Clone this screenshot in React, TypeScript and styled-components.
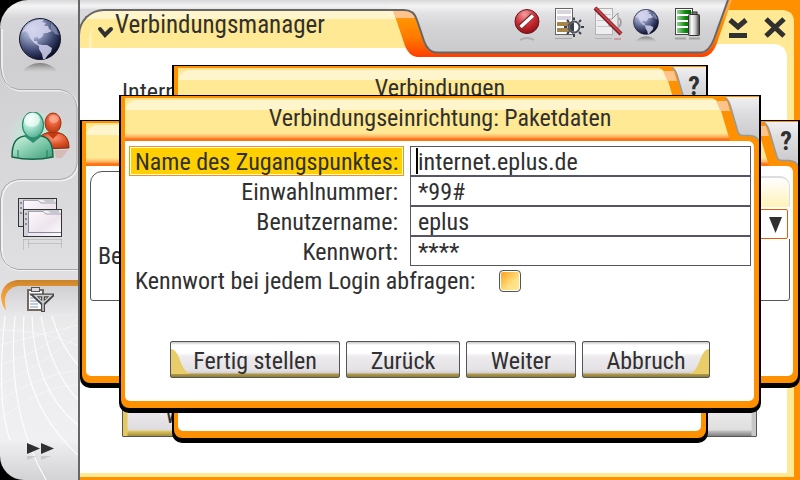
import React, { useState } from 'react';
import styled, { createGlobalStyle, css } from 'styled-components';

const orange = '#ff9000';
const ink = '#303030';
const paleYellow = '#fff5cc';
const yellow = '#ffe994';

const GlobalStyle = createGlobalStyle`
  *, *::before, *::after { box-sizing: border-box; }
  html, body, #root { height: 100%; }
  body {
    margin: 0;
    background: #000;
    color: ${ink};
    font: 24px/28px "Roboto Condensed", "Liberation Sans", sans-serif;
    overflow: hidden;
  }
  button, input, select { font: inherit; color: inherit; margin: 0; }
`;

/* ---------- desktop frame ---------- */

const Desktop = styled.div`
  position: relative;
  display: flex;
  height: 100%;
  overflow: hidden;
`;

const Sidebar = styled.nav`
  position: relative;
  display: flex;
  flex-direction: column;
  flex: 0 0 80px;
  border-right: 2px solid #666;
  border-radius: 28px 0 0 24px;
  background: linear-gradient(#d8d8da 0, #f4f4f5 6px, #d6d6d8 18px, #cfcfd1 60px, #dadadc 200px, #e0e0e2 280px, #ebebed 330px, #f0f0f2 440px, #d4d4d6 478px);
  overflow: hidden;
`;

const SidebarArt = styled.svg`
  position: absolute;
  inset: 0;
  width: 78px;
  height: 480px;
`;

const SideButton = styled.button<{ $height: number; $top: number }>`
  position: relative;
  display: flex;
  justify-content: center;
  align-items: flex-start;
  height: ${(p) => p.$height}px;
  padding: ${(p) => p.$top}px 0 0 2px;
  border: 0;
  background: none;
`;

const SideSpacer = styled.div`
  flex: 1;
`;

const MainWindow = styled.main`
  flex: 1;
  min-width: 0;
  display: flex;
  flex-direction: column;
  background: ${orange};
`;

/* ---------- top bar ---------- */

const TopBar = styled.header`
  position: relative;
  display: flex;
  flex: 0 0 58px;
  background: linear-gradient(#d8d8da, #f4f4f5 6px, #e4e4e6 9px, #fff 9px);
`;

const TitleTabBack = styled.div`
  display: flex;
  flex: 1;
  min-width: 0;
  height: 39px;
  margin-top: 9px;
  background: linear-gradient(90deg, #dadadc 24px, transparent 24px);
`;

const TitleTab = styled.div`
  display: flex;
  flex: 1;
  margin: 0 118px 0 -2px;
  border: solid #666;
  border-width: 2px 0 0 2px;
  border-radius: 26px 0 0 0;
  background: linear-gradient(${paleYellow} 8px, ${yellow} 8px);
  overflow: hidden;
`;

const TitleButton = styled.button`
  flex: 1;
  display: flex;
  align-items: center;
  gap: 1px;
  margin: 8px 0 0 9px;
  padding: 0 0 18px 8px;
  border: 0;
  border-radius: 20px 0 0 0;
  background: linear-gradient(90deg, ${paleYellow}, ${yellow} 4px);
  font-size: 25px;
  line-height: 16px;
`;

const Chevron = styled.svg`
  width: 17px;
  height: 32px;
`;

const FrameArt = styled.svg`
  position: absolute;
  right: 0;
  top: 0;
  width: 410px;
  height: 58px;
`;

const Tray = styled.ul`
  position: relative;
  display: flex;
  gap: 8px;
  margin: 0;
  padding: 6px 19px 0 0;
  list-style: none;
`;

const TrayItem = styled.li`
  width: 32px;
  height: 36px;
`;

const GlobeItem = styled(TrayItem)`
  padding: 3px 0 0 1px;
`;

const WindowControls = styled.div`
  position: relative;
  display: flex;
  gap: 8px;
  padding: 16px 11px 0 0;
`;

const ControlButton = styled.button`
  width: 29px;
  height: 28px;
  padding: 0;
  border: 0;
  background: none;
`;

/* ---------- manager page ---------- */

const Page = styled.section`
  flex: 1;
  display: flex;
  flex-direction: column;
  justify-content: space-between;
  margin: 0 6px 3px 0;
  padding: 20px 30px 36px 42px;
  border: solid ${yellow};
  border-width: 0 7px 4px 0;
  background: #fff;
`;

const PageActions = styled.div`
  display: flex;
  justify-content: space-between;
`;

const PageButton = styled.button<{ $gold?: boolean }>`
  width: 150px;
  height: 44px;
  border: 1px solid #555;
  border-radius: 1px;
  padding: 0 0 0 42px;
  text-align: left;
  background: ${(p) =>
    p.$gold
      ? 'linear-gradient(90deg, #e3c960 4px, transparent 5px), linear-gradient(#f6f4f6, #dedcde 36px, #e3c960 37px, #a08c3c)'
      : 'linear-gradient(270deg, #c8c8c8 4px, transparent 5px), linear-gradient(#f6f6f6, #dedede 36px, #c0c0c0 37px, #808080)'};
`;

/* ---------- dialogs ---------- */

type Inset = { $left: number; $right: number; $top: number; $bottom?: number };

const DialogBox = styled.section<Inset>`
  position: absolute;
  left: ${(p) => p.$left}px;
  right: ${(p) => p.$right}px;
  top: ${(p) => p.$top}px;
  ${(p) => p.$bottom !== undefined && css`bottom: ${p.$bottom}px;`}
  display: flex;
  flex-direction: column;
  border: solid #000;
  border-width: 1px 2px 5px 2px;
  border-radius: 0 0 10px 10px;
  background: #000;
`;

const DialogFrame = styled.div`
  flex: 1;
  display: flex;
  flex-direction: column;
  border: solid ${orange};
  border-width: 0 5px 7px 4px;
  border-radius: 0 0 8px 8px;
  background: ${orange};
`;

const DialogTitle = styled.header`
  position: relative;
  display: flex;
  height: 45px;
  margin-right: -5px;
  background: linear-gradient(${orange} 2px, #ffe08a 2px, ${yellow} 6px, ${yellow} 37px, #ffb060 41px, #ff7010 43px, #ff7810);
`;

const TitleGlow = styled.div`
  flex: 1;
  margin: 4px 30px 0 0;
  height: 14px;
  border-radius: 12px 0 0 0;
  background: linear-gradient(#fff5cc, #fff5cc 10px, ${yellow} 10px);
`;

const CornerArt = styled.svg`
  position: absolute;
  right: 0;
  top: 0;
  width: 56px;
  height: 45px;
`;

const DialogHeading = styled.h2`
  position: absolute;
  left: 0;
  right: 4px;
  top: 8px;
  margin: 0;
  font-size: 24px;
  line-height: 28px;
  font-weight: 400;
  text-align: center;
`;

const HelpButton = styled.button`
  position: absolute;
  right: 0;
  top: 6px;
  width: 24px;
  height: 28px;
  padding: 0;
  border: 0;
  background: none;
  font-size: 26px;
  font-weight: 700;
`;

const DialogBody = styled.div`
  flex: 1;
  padding: 5px 3px 23px 4px;
  border-radius: 0 6px 5px 5px;
  background: #fff;
`;

/* ---------- access point form ---------- */

const Form = styled.form`
  display: flex;
  flex-direction: column;
`;

const Fields = styled.div`
  display: grid;
  grid-template-columns: 275px 1fr;
  column-gap: 6px;
  grid-auto-rows: 30px;
`;

const FieldLabel = styled.label<{ $active?: boolean }>`
  padding: 0 5px;
  border: 1px solid ${(p) => (p.$active ? orange : 'transparent')};
  background: ${(p) => (p.$active ? '#ffd000' : 'none')};
  box-shadow: ${(p) => (p.$active ? 'inset 0 0 0 1px #fff' : 'none')};
  line-height: 30px;
  text-align: right;
  white-space: nowrap;
`;

const TextInput = styled.input`
  width: 100%;
  min-width: 0;
  height: 30px;
  padding: 2px 7px 0;
  border: 1px solid #555566;
  border-radius: 0;
  background: #fff;
  outline: none;
`;

const InputCell = styled.div`
  position: relative;
  display: flex;
`;

const Caret = styled.span`
  position: absolute;
  left: 6px;
  top: 2px;
  width: 2px;
  height: 26px;
  background: #000;
`;

const CheckRow = styled.div`
  display: flex;
  align-items: center;
  gap: 24px;
  height: 30px;
  padding-left: 6px;
  line-height: 30px;
  white-space: nowrap;
`;

const CheckBox = styled.input`
  appearance: none;
  width: 22px;
  height: 22px;
  border: 1px solid #555;
  border-radius: 4px;
  background: linear-gradient(135deg, #ff9a10, #ffe083 60%, #ffe994);
  box-shadow: inset 0 0 0 1px #fff;
`;

const Actions = styled.div`
  display: flex;
  justify-content: center;
  gap: 6px;
  margin-top: 45px;
`;

const ActionButton = styled.button<{ $width: number }>`
  position: relative;
  width: ${(p) => p.$width}px;
  height: 37px;
  padding: 2px 0 0;
  border: 1px solid #555;
  border-radius: 2px;
  background: linear-gradient(#c4c4c6 0, #fff 3px, #fff 11px, #eeecef 14px, #e4e1e5 28px, #d4d0d4 31px, #b39c4a 32px, #8c7a35);
`;

const CornerWave = styled.svg<{ $side: 'left' | 'right' }>`
  position: absolute;
  ${(p) => p.$side}: 0;
  top: 7px;
  width: 20px;
  height: 26px;
  ${(p) => p.$side === 'right' && css`transform: scaleX(-1);`}
`;

/* ---------- bearer group ---------- */

const Group = styled.div`
  position: relative;
  display: flex;
  justify-content: space-between;
  height: 130px;
  border: 1px solid #555;
  border-radius: 12px 10px 3px 3px;
`;

const GroupLabel = styled.label`
  padding: 70px 0 0 7px;
`;

const GroupSide = styled.div`
  flex: 0 0 80px;
  margin: -1px -1px 0 0;
  padding-top: 5px;
  background: #fff;
  height: 68px;
`;

const GroupGlow = styled.div`
  height: 31px;
  border: solid #ddd;
  border-width: 2px 1px 0 0;
  border-radius: 0 10px 0 0;
  background: linear-gradient(#fff, #fff2b8);
`;

const Select = styled.select`
  display: block;
  width: 78px;
  height: 30px;
  margin-top: 2px;
  border: 1px solid #e65c00;
  border-radius: 2px;
  appearance: none;
  background: #fff;
`;

const SelectArrow = styled.svg`
  position: absolute;
  right: 7px;
  top: 45px;
  width: 13px;
  height: 16px;
  pointer-events: none;
`;

/* ---------- icons ---------- */

function Globe({ size, id }: { size: number; id: string }) {
  return (
    <svg width={size} height={Math.round((size * 54) / 42)} viewBox="0 0 42 54" aria-hidden="true">
      <defs>
        <radialGradient id={id} cx="0.32" cy="0.25" r="0.8">
          <stop offset="0" stopColor="#dce0f0" />
          <stop offset="0.35" stopColor="#8b95b8" />
          <stop offset="0.7" stopColor="#39436b" />
          <stop offset="1" stopColor="#070a20" />
        </radialGradient>
        <linearGradient id={`${id}m`} x2="0" y2="1">
          <stop offset="0" stopColor="#555" stopOpacity="0.7" />
          <stop offset="1" stopColor="#999" stopOpacity="0" />
        </linearGradient>
      </defs>
      <circle cx="21" cy="21" r="20.5" fill={`url(#${id})`} stroke="#15182c" />
      <path
        d="M3 15 C6 8 12 3 20 1.500 L25 1.500 23 4 27 5 25 8 29 8 30 11 33 13 28 15 25 15 23 19 20 21 18 19 15 20 15 23 18 23 19 26 23 27 28 27 33 30 32 34 29 37 26 41 24 41 23 36 20 31 20 28 15 25 11 20 9 15 6 13Z"
        fill="#d4d4ee"
        opacity="0.85"
      />
      <path d="M32 5 37 10 40 17 36 16 32 11Z" fill="#9298bb" opacity="0.7" />
      <path d="M3 54 C12 42 30 42 39 54Z" fill={`url(#${id}m)`} />
    </svg>
  );
}

function People() {
  return (
    <svg width="64" height="54" viewBox="0 0 64 54" aria-hidden="true">
      <defs>
        <radialGradient id="pg" cx="0.35" cy="0.25" r="0.9">
          <stop offset="0" stopColor="#fff" />
          <stop offset="0.35" stopColor="#b4ead8" />
          <stop offset="1" stopColor="#3aa282" />
        </radialGradient>
        <radialGradient id="po" cx="0.5" cy="0.3" r="0.8">
          <stop offset="0" stopColor="#ff9a7a" />
          <stop offset="0.5" stopColor="#e0542a" />
          <stop offset="1" stopColor="#a83410" />
        </radialGradient>
        <radialGradient id="ph">
          <stop offset="0.4" stopColor="#b4f2d8" />
          <stop offset="1" stopColor="#b4f2d8" stopOpacity="0" />
        </radialGradient>
        <linearGradient id="pb" x2="1" y2="1">
          <stop offset="0" stopColor="#d4f4e4" />
          <stop offset="0.5" stopColor="#84ccae" />
          <stop offset="1" stopColor="#3c9c78" />
        </linearGradient>
      </defs>
      <ellipse cx="30" cy="24" rx="31" ry="27" fill="url(#ph)" opacity="0.7" />
      <path d="M32 37 C29 24 34 21 42 21 H49 C57 21 61 27 61 36 Z" fill="url(#po)" stroke="#8c2a0a" />
      <path d="M38 20 L45 27 52 20Z" fill="#c43c14" />
      <ellipse cx="45" cy="11" rx="8" ry="10" fill="url(#po)" stroke="#a03010" />
      <ellipse cx="46" cy="7" rx="5" ry="4" fill="#ffb4a4" opacity="0.6" />
      <path d="M46 38 H60 L54 46 H48Z" fill="#d05030" opacity="0.2" />
      <path d="M4 45 C4 31 8 25 17 24 H33 C41 25 45 31 45 45 C32 48 17 48 4 45Z" fill="url(#pb)" stroke="#176648" strokeWidth="1.5" />
      <path d="M16 24 L25 31 34 24Z" fill="#2c9070" />
      <path d="M10 45 V38 M39 45 V38" stroke="#237a58" />
      <ellipse cx="25" cy="13" rx="10.500" ry="13" fill="url(#pg)" stroke="#2c8c6c" strokeWidth="1.2" />
      <ellipse cx="24" cy="8" rx="8" ry="7" fill="#f6fffb" opacity="0.65" />
    </svg>
  );
}

function Windows() {
  const pane = (x: number, y: number, w: number, h: number) => (
    <g transform={`translate(${x} ${y})`}>
      <rect x="0.5" y="0.5" width={w} height={h} fill="url(#wn)" stroke="#333" />
      <rect x="1" y="1" width="4" height={h - 1} fill="#d2d2d8" />
      <path d="M5 1 H36 V4 H28 L25 2 H5Z" fill="#c6c6ce" />
      <path d={`M5 2.500 H20 L23 5 H${w}`} fill="none" stroke="#a6a2ae" />
      <path d="M2 5 H4 M2 10 H4 M2 15 H4" stroke="#8c8c98" strokeWidth="2" />
      <path d={`M5 ${h - 3.5} H${w} M5.500 2 V${h - 3}`} stroke="#88889a" fill="none" />
    </g>
  );
  return (
    <svg width="44" height="54" viewBox="0 0 44 54" aria-hidden="true">
      <defs>
        <linearGradient id="wn" x2="1" y2="1">
          <stop offset="0" stopColor="#fff" />
          <stop offset="0.6" stopColor="#eee4ee" />
          <stop offset="1" stopColor="#fff" />
        </linearGradient>
      </defs>
      {pane(0, 0, 38, 28)}
      {pane(5, 11, 38, 27)}
      <path d="M5.500 41 V52 M43.500 41 V50 M5 41.500 H44 M10.500 42 V50 M10 45.500 H44" stroke="#999" opacity="0.4" fill="none" />
    </svg>
  );
}

function Clipboard() {
  return (
    <svg width="28" height="26" viewBox="0 0 28 26" aria-hidden="true">
      <rect x="2" y="3" width="15" height="20" fill="#fff" stroke="#75695e" strokeWidth="2" />
      <path d="M4 8 H14 M4 11 H10 M4 14 H11 M4 17 H12 M4 20 H12" stroke="#8298bb" />
      <rect x="5.500" y="0.500" width="8" height="4" fill="#ddd" stroke="#555" />
      <path d="M8 8.500 H26 L17 17 Z M17 9 V25" fill="none" stroke="#484848" strokeWidth="4" />
      <path d="M9 8.500 H25 L17 16 Z M17 9 V24" fill="none" stroke="#d0d0d0" strokeWidth="1.500" />
    </svg>
  );
}

function Arrows() {
  return (
    <svg width="28" height="20" viewBox="0 0 28 20" aria-hidden="true">
      <path d="M1 0 L14 5.500 1 11Z M15 0 L28 5.500 15 11Z" fill={ink} />
      <path d="M1 13 H11 L1 17Z M15 13 H25 L15 17Z" fill="#999" opacity="0.35" />
    </svg>
  );
}

function Blocked() {
  return (
    <svg width="32" height="36" viewBox="0 0 32 36" aria-hidden="true">
      <defs>
        <radialGradient id="br" cx="0.4" cy="0.2" r="0.85">
          <stop offset="0" stopColor="#f4a0a0" />
          <stop offset="0.5" stopColor="#cc2f38" />
          <stop offset="1" stopColor="#8c0c10" />
        </radialGradient>
      </defs>
      <circle cx="15" cy="15.500" r="12" fill="url(#br)" stroke="#64181c" />
      <path d="M8 21 L21 9" stroke="#5a2020" strokeWidth="5" />
      <path d="M8.500 21 L21 9.500" stroke="#fff" strokeWidth="3.500" />
      <path d="M8 34 Q15 30 22 34" fill="none" stroke="#999" strokeWidth="2" opacity="0.6" />
    </svg>
  );
}

function Brightness() {
  return (
    <svg width="32" height="36" viewBox="0 0 32 36" aria-hidden="true">
      <rect x="3.500" y="2.500" width="17" height="26" fill="#fff" stroke="#666" />
      <path d="M5 4 H19 V8 H5Z M5 10 H19 V14 H5Z" fill="#dad4de" />
      <path d="M5 16 H19 V20 H5Z M5 22 H19 V26 H5Z" fill="#a58549" />
      <path d="M22 11.500 V14 M22 28 V31 M12 21 H15 M29 21 H32 M15 14 L17 16 M27 26 L29 28 M15 28 L17 26 M27 16 L29 14" stroke="#3c4050" strokeWidth="2" />
      <circle cx="22" cy="21" r="5.500" fill="#fff" stroke="#50545e" strokeWidth="2" />
      <path d="M22 16.500 A4.500 4.500 0 0 0 22 25.500Z" fill="#3c404e" />
      <path d="M3 32.500 H20" stroke="#888" opacity="0.6" />
    </svg>
  );
}

function Muted() {
  return (
    <svg width="32" height="36" viewBox="0 0 32 36" aria-hidden="true">
      <rect x="3.500" y="2.500" width="17" height="26" fill="#eeeef0" stroke="#b2b2b6" />
      <path d="M5 8.500 H19 M5 14.500 H19 M5 20.500 H19" stroke="#c8c6cc" />
      <path d="M17 13 H20 L26 7 V25 L20 20 H17Z" fill="#e8e8e8" stroke="#999" />
      <path d="M27 12 Q31 16 27 21" fill="none" stroke="#999" strokeWidth="1.500" />
      <path d="M3 2 L29 28" stroke="#7a1a20" strokeWidth="4" />
      <path d="M3 1.500 L29 27.500" stroke="#c84048" strokeWidth="2" />
      <path d="M3 32.500 H20" stroke="#999" opacity="0.5" />
      <path d="M22 33 H29" stroke="#d05060" strokeWidth="2" opacity="0.4" />
    </svg>
  );
}

function Battery() {
  return (
    <svg width="32" height="36" viewBox="0 0 32 36" aria-hidden="true">
      <defs>
        <linearGradient id="bt">
          <stop offset="0" stopColor="#888" />
          <stop offset="0.3" stopColor="#fff" />
          <stop offset="0.65" stopColor="#bbb" />
          <stop offset="1" stopColor="#333" />
        </linearGradient>
        <linearGradient id="bg">
          <stop offset="0" stopColor="#8ed48e" />
          <stop offset="0.6" stopColor="#118811" />
          <stop offset="1" stopColor="#086808" />
        </linearGradient>
      </defs>
      <rect x="3.500" y="2.500" width="17" height="26" fill="#fff" stroke="#444" />
      <path d="M5 4 H19 V8 H5Z M5 10 H19 V14 H5Z M5 16 H19 V20 H5Z M5 22 H19 V27 H5Z" fill="url(#bg)" />
      <rect x="20" y="6" width="5" height="3" fill="#777" stroke="#333" />
      <rect x="16.500" y="8.500" width="11" height="21" rx="1" fill="url(#bt)" stroke="#333" />
      <path d="M3 32.500 H14 M17 32.500 H28" stroke="#777" strokeWidth="2" opacity="0.5" />
    </svg>
  );
}

/* ---------- parts ---------- */

function SideArt() {
  return (
    <SidebarArt viewBox="0 0 78 480" aria-hidden="true">
      <defs>
        <linearGradient id="active" x2="0" y2="1">
          <stop offset="0" stopColor="#c88428" />
          <stop offset="0.3" stopColor="#e89838" />
          <stop offset="1" stopColor="#ffb050" />
        </linearGradient>
        <linearGradient id="activeIn" x2="0" y2="1">
          <stop offset="0" stopColor="#d0d0d2" />
          <stop offset="1" stopColor="#e9e9eb" />
        </linearGradient>
      </defs>
      <g fill="none" strokeWidth="2">
        <path d="M1 28 V67 Q2 87 18 89.500 H60 Q76 92 77 108 V164 Q75 178 60 179.500 H18 Q2 182 1 199 V250 Q2 267 18 269 H78" stroke="#fff" opacity="0.6" transform="translate(1 1)" />
        <path d="M0.500 28 V67 Q2 87 18 89.500 H60 Q76 92 77 108 V164 Q75 178 60 179.500 H18 Q2 182 0.500 199 V250 Q2 267 18 269.500 H78" stroke="#a6a6aa" strokeWidth="1" />
      </g>
      <path d="M78 280 H17 Q3 282 1 296 Q1 305 7 312 H78Z" fill="url(#active)" />
      <path d="M78 286 H18 Q6 288 5 299 Q5 306 7 316 H78Z" fill="url(#activeIn)" />
      <g fill="none" stroke="#fff" strokeWidth="1.200" opacity="0.85">
        <path d="M5 316 Q-4 400 10 440" />
        <path d="M15 316 Q6 410 46 480" />
        <path d="M24 316 Q18 400 78 455" />
        <path d="M32 316 Q34 390 78 425" />
        <path d="M41 316 Q50 370 78 400" />
        <path d="M52 316 Q60 345 78 365" />
      </g>
      <g fill="none" stroke="#fff" strokeWidth="0.800" opacity="0.5">
        <path d="M0 330 Q40 330 78 345 M0 345 Q40 335 78 325 M0 365 Q50 350 78 318 M0 385 Q50 360 78 335 M0 400 Q40 375 78 370 M0 420 Q40 385 78 385" />
      </g>
    </SidebarArt>
  );
}

function WindowFrameArt() {
  return (
    <FrameArt viewBox="390 0 410 58" aria-hidden="true">
      <defs>
        <linearGradient id="tray" gradientUnits="userSpaceOnUse" x1="0" y1="0" x2="0" y2="53">
          <stop offset="0" stopColor="#d8d8da" />
          <stop offset="0.110" stopColor="#f4f4f5" />
          <stop offset="0.250" stopColor="#e2e2e4" />
          <stop offset="0.500" stopColor="#d4d4d6" />
          <stop offset="1" stopColor="#cacacc" />
        </linearGradient>
        <linearGradient id="band" gradientUnits="userSpaceOnUse" x1="0" y1="10" x2="0" y2="56">
          <stop offset="0" stopColor="#ffa63c" />
          <stop offset="0.250" stopColor="#ff9000" />
          <stop offset="0.600" stopColor="#ff7a00" />
          <stop offset="1" stopColor="#ff4000" />
        </linearGradient>
      </defs>
      <rect x="700" width="100" height="58" fill={orange} />
      <path d="M700 10 H783 Q794 11 794 22 V58 H700Z" fill={yellow} />
      <path d="M420 44 H774 Q787 45 787 58 V60 H420Z" fill="#fff" />
      <path d="M390 10 H396 L407 48 H390Z" fill={yellow} />
      <path d="M390 10 H396 L399 19 H390Z" fill={paleYellow} />
      <path d="M393 10 H420 L440 53 H700 L727 0 H732 L718 40 Q713 57 702 57 H417 Q409 56 405 46Z" fill="url(#band)" />
      <path d="M393 10 H412 L415 18 H396Z" fill="#ffc48c" />
      <path d="M390 0 H728 L715 38 Q710 53 701 53 H436 Q428 52 424 41 L417 19 Q414 9 404 9 H390Z" fill="url(#tray)" />
      <path d="M390 10 H404 Q414 10 417 20 L424 41 Q428 52.500 437 52.500 H701 Q709 52 714 39 L728 0" fill="none" stroke="#666" strokeWidth="2" />
    </FrameArt>
  );
}

interface DialogProps {
  label: string;
  title?: string;
  left: number;
  right: number;
  top: number;
  bottom?: number;
  help?: boolean;
  children?: React.ReactNode;
}

function Dialog({ label, title, left, right, top, bottom, help, children }: DialogProps) {
  return (
    <DialogBox $left={left} $right={right} $top={top} $bottom={bottom} role="dialog" aria-label={label}>
      <DialogFrame>
        <DialogTitle>
          <TitleGlow />
          <CornerArt viewBox="0 0 56 45" aria-hidden="true">
            <defs>
              <linearGradient id="corner" x2="0" y2="1">
                <stop offset="0" stopColor="#f0f0f2" />
                <stop offset="0.400" stopColor="#dcdcde" />
                <stop offset="1" stopColor="#c8c8ca" />
              </linearGradient>
            </defs>
            <path d="M0 0 H56 V45 H27 L16 8 Q13 2 6 1.500 H0Z" fill={orange} />
            <path d="M13 5 L24 5 L27 15 H17.500Z" fill="#ffc48c" />
            <path d="M22 1 Q26 4 28 12 L35 36 Q36 39.500 40 39.500 H47 Q54 40 56 45 V1Z" fill="url(#corner)" />
            <path d="M22 1 Q26 4 28 12 L35 36 Q36 39.500 40 39.500 H47 Q54 40 56 45" fill="none" stroke="#999" strokeWidth="1.500" />
          </CornerArt>
          {title && <DialogHeading>{title}</DialogHeading>}
          {help && <HelpButton type="button" aria-label="Hilfe">?</HelpButton>}
        </DialogTitle>
        <DialogBody>{children}</DialogBody>
      </DialogFrame>
    </DialogBox>
  );
}

const wavePath = 'M0 0 C10 1 8 22 20 25 H0Z';

function AccessPointForm() {
  const [values, setValues] = useState({ apn: 'internet.eplus.de', dial: '*99#', user: 'eplus', pass: '****' });
  const fields: { id: keyof typeof values; label: string }[] = [
    { id: 'apn', label: 'Name des Zugangspunktes:' },
    { id: 'dial', label: 'Einwahlnummer:' },
    { id: 'user', label: 'Benutzername:' },
    { id: 'pass', label: 'Kennwort:' },
  ];
  return (
    <Form onSubmit={(e) => e.preventDefault()}>
      <Fields>
        {fields.map((f, i) => (
          <React.Fragment key={f.id}>
            <FieldLabel htmlFor={f.id} $active={i === 0}>{f.label}</FieldLabel>
            <InputCell>
              <TextInput
                id={f.id}
                value={values[f.id]}
                onChange={(e) => setValues({ ...values, [f.id]: e.target.value })}
              />
              {i === 0 && <Caret />}
            </InputCell>
          </React.Fragment>
        ))}
      </Fields>
      <CheckRow>
        <label htmlFor="ask">Kennwort bei jedem Login abfragen:</label>
        <CheckBox id="ask" type="checkbox" />
      </CheckRow>
      <Actions>
        <ActionButton type="submit" $width={170}>
          <CornerWave $side="left" viewBox="0 0 20 26" aria-hidden="true"><path d={wavePath} fill="#e8cd68" /></CornerWave>
          Fertig stellen
        </ActionButton>
        <ActionButton type="button" $width={114}>Zurück</ActionButton>
        <ActionButton type="button" $width={110}>Weiter</ActionButton>
        <ActionButton type="button" $width={128}>
          <CornerWave $side="right" viewBox="0 0 20 26" aria-hidden="true"><path d={wavePath} fill="#e8cd68" /></CornerWave>
          Abbruch
        </ActionButton>
      </Actions>
    </Form>
  );
}

export default function App() {
  return (
    <>
      <GlobalStyle />
      <Desktop>
        <Sidebar aria-label="Anwendungen">
          <SideArt />
          <SideButton $height={90} $top={18} aria-label="Web"><Globe size={42} id="g1" /></SideButton>
          <SideButton $height={90} $top={22} aria-label="Kontakte"><People /></SideButton>
          <SideButton $height={100} $top={18} aria-label="Fenster"><Windows /></SideButton>
          <SideButton $height={36} $top={7} aria-label="Verbindungsmanager"><Clipboard /></SideButton>
          <SideSpacer />
          <SideButton $height={37} $top={0} aria-label="Weitere"><Arrows /></SideButton>
        </Sidebar>
        <MainWindow>
          <TopBar>
            <WindowFrameArt />
            <TitleTabBack>
              <TitleTab>
                <TitleButton type="button">
                  <Chevron viewBox="0 0 17 32" aria-hidden="true">
                    <path d="M3 20 L8 26 14 20" fill="none" stroke={ink} strokeWidth="4" strokeLinecap="round" />
                  </Chevron>
                  Verbindungsmanager
                </TitleButton>
              </TitleTab>
            </TitleTabBack>
            <Tray aria-label="Status">
              <TrayItem><Blocked /></TrayItem>
              <TrayItem><Brightness /></TrayItem>
              <TrayItem><Muted /></TrayItem>
              <GlobeItem><Globe size={26} id="g2" /></GlobeItem>
              <TrayItem><Battery /></TrayItem>
            </Tray>
            <WindowControls>
              <ControlButton type="button" aria-label="Minimieren">
                <svg width="20" height="24" viewBox="0 0 20 24" aria-hidden="true">
                  <path d="M2 4 L10 11 18 4" fill="none" stroke={ink} strokeWidth="5" />
                  <path d="M1 19.500 H19" stroke={ink} strokeWidth="5" />
                </svg>
              </ControlButton>
              <ControlButton type="button" aria-label="Schließen">
                <svg width="22" height="24" viewBox="0 0 22 24" aria-hidden="true">
                  <path d="M2 3 L20 20 M20 3 L2 20" stroke={ink} strokeWidth="5" />
                </svg>
              </ControlButton>
            </WindowControls>
          </TopBar>
          <Page>
            <div>Internet</div>
            <PageActions>
              <PageButton type="button" $gold>Weiter</PageButton>
              <PageButton type="button" aria-label="Schließen" />
            </PageActions>
          </Page>
        </MainWindow>

        <Dialog label="Verbindungen" title="Verbindungen" left={172} right={92} top={65} bottom={37} help />
        <Dialog label="Optionen" left={80} right={0} top={120} bottom={92} help>
          <Group>
            <GroupLabel htmlFor="mode">Bearer</GroupLabel>
            <GroupSide>
              <GroupGlow />
              <Select id="mode" />
            </GroupSide>
            <SelectArrow viewBox="0 0 13 16" aria-hidden="true"><path d="M0 0 H13 L6.500 16Z" fill={ink} /></SelectArrow>
          </Group>
        </Dialog>
        <Dialog label="Verbindungseinrichtung" title="Verbindungseinrichtung: Paketdaten" left={119} right={39} top={95}>
          <AccessPointForm />
        </Dialog>
      </Desktop>
    </>
  );
}
